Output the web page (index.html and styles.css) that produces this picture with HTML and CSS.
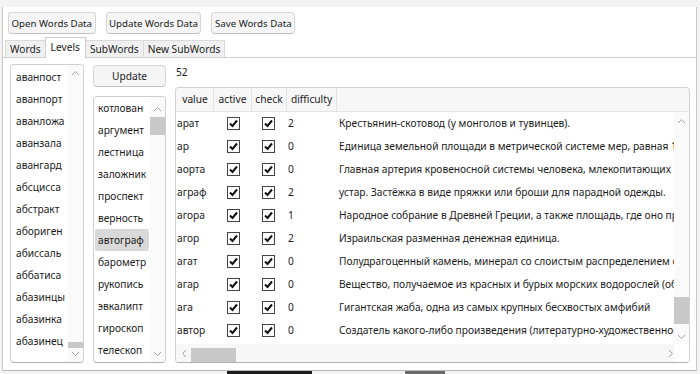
FILE: index.html
```html
<!DOCTYPE html>
<html lang="ru">
<head>
  <meta charset="UTF-8">
  <title>Words Data</title>
  <link rel="stylesheet" href="styles.css">
</head>
<body>
<div class="topband"></div>
<div class="window">
  <div class="toolbar">
    <button class="btn">Open Words Data</button>
    <button class="btn">Update Words Data</button>
    <button class="btn">Save Words Data</button>
  </div>

  <div class="tabs">
    <span class="tab">Words</span>
    <span class="tab selected">Levels</span>
    <span class="tab">SubWords</span>
    <span class="tab">New SubWords</span>
  </div>

  <div class="panel">
    <div class="listbox levels">
      <div class="items">
        <div class="item">аванпост</div>
        <div class="item">аванпорт</div>
        <div class="item">аванложа</div>
        <div class="item">аванзала</div>
        <div class="item">авангард</div>
        <div class="item">абсцисса</div>
        <div class="item">абстракт</div>
        <div class="item">абориген</div>
        <div class="item">абиссаль</div>
        <div class="item">аббатиса</div>
        <div class="item">абазинцы</div>
        <div class="item">абазинка</div>
        <div class="item">абазинец</div>
      </div>
      <div class="vscroll">
        <svg class="chev" width="9" height="6" viewBox="0 0 9 6"><polyline points="1,5 4.5,1.5 8,5"/></svg>
        <div class="track"><div class="thumb thumb-end"></div></div>
        <svg class="chev" width="9" height="6" viewBox="0 0 9 6"><polyline points="1,1 4.5,4.5 8,1"/></svg>
      </div>
    </div>

    <div class="col-mid">
      <button class="btn update">Update</button>
      <div class="listbox words">
        <div class="items">
          <div class="item">котлован</div>
          <div class="item">аргумент</div>
          <div class="item">лестница</div>
          <div class="item">заложник</div>
          <div class="item">проспект</div>
          <div class="item">верность</div>
          <div class="item active">автограф</div>
          <div class="item">барометр</div>
          <div class="item">рукопись</div>
          <div class="item">эвкалипт</div>
          <div class="item">гироскоп</div>
          <div class="item">телескоп</div>
        </div>
        <div class="vscroll">
          <svg class="chev" width="9" height="6" viewBox="0 0 9 6"><polyline points="1,5 4.5,1.5 8,5"/></svg>
          <div class="track"><div class="thumb thumb-top"></div></div>
          <svg class="chev" width="9" height="6" viewBox="0 0 9 6"><polyline points="1,1 4.5,4.5 8,1"/></svg>
        </div>
      </div>
    </div>

    <div class="col-grid">
      <div class="count">52</div>
      <div class="grid">
        <div class="grid-head">
          <span class="c-value">value</span>
          <span class="c-active">active</span>
          <span class="c-check">check</span>
          <span class="c-diff">difficulty</span>
          <span class="c-desc"></span>
        </div>
        <div class="grid-body">
          <div class="rows" id="rows"></div>
          <div class="vscroll">
            <svg class="chev" width="9" height="6" viewBox="0 0 9 6"><polyline points="1,5 4.5,1.5 8,5"/></svg>
            <div class="track"><div class="thumb thumb-grid"></div></div>
            <svg class="chev" width="9" height="6" viewBox="0 0 9 6"><polyline points="1,1 4.5,4.5 8,1"/></svg>
          </div>
        </div>
        <div class="hscroll">
          <svg class="chev" width="6" height="9" viewBox="0 0 6 9"><polyline points="5,1 1.5,4.5 5,8"/></svg>
          <div class="htrack"><div class="hthumb"></div></div>
          <svg class="chev" width="6" height="9" viewBox="0 0 6 9"><polyline points="1,1 4.5,4.5 1,8"/></svg>
          <div class="corner"></div>
        </div>
      </div>
    </div>
  </div>
</div>
<div class="taskbar"><span class="dark"></span><span class="mid"></span></div>

<script>
  const words = [
    ["арат", 2, "Крестьянин-скотовод (у монголов и тувинцев)."],
    ["ар", 0, "Единица земельной площади в метрической системе мер, равная 100 кв. м."],
    ["аорта", 0, "Главная артерия кровеносной системы человека, млекопитающих и птиц."],
    ["аграф", 2, "устар. Застёжка в виде пряжки или броши для парадной одежды."],
    ["агора", 1, "Народное собрание в Древней Греции, а также площадь, где оно проходило."],
    ["агор", 2, "Израильская разменная денежная единица."],
    ["агат", 0, "Полудрагоценный камень, минерал со слоистым распределением окраски."],
    ["агар", 0, "Вещество, получаемое из красных и бурых морских водорослей (обычно агар-агар)."],
    ["ага", 0, "Гигантская жаба, одна из самых крупных бесхвостых амфибий"],
    ["автор", 0, "Создатель какого-либо произведения (литературно-художественного, научного)."],
    ["авось", 0, ""]
  ];

  const box = '<span class="box"><svg width="11" height="11" viewBox="0 0 11 11"><polyline points="2,5.5 4.5,8 9,2.5"/></svg></span>';
  document.getElementById("rows").innerHTML = words.map(w => `
    <div class="row">
      <span class="c-value">${w[0]}</span>
      <span class="c-active">${box}</span>
      <span class="c-check">${box}</span>
      <span class="c-diff">${w[1]}</span>
      <span class="c-desc">${w[2]}</span>
    </div>`).join("");
</script>
</body>
</html>
```

FILE: styles.css
```css
* { box-sizing: border-box; }
html, body { margin: 0; height: 100%; overflow: hidden; }
body {
  font-family: "Noto Sans", "Open Sans", sans-serif;
  font-size: 10.2px;
  color: #1b1b1b;
  background: #f3f3f3;
}
.topband { height: 7px; }
.window {
  background: #fff;
  margin-left: 2px;
  margin-right: 3px;
  height: 364px;
  border-left: 1px solid #c8c8c8;
  border-right: 1px solid #c8c8c8;
  display: flex;
  flex-direction: column;
}
.btn {
  font: inherit;
  color: #1b1b1b;
  background: #f5f5f5;
  border: 1px solid #d6d6d6;
  border-bottom-color: #c2c2c2;
  border-radius: 4px;
  height: 22px;
  padding: 0 2px;
}
.toolbar { display: flex; gap: 10px; padding: 5px 0 0 5px; flex: none; }
.toolbar .btn { padding: 0 2.5px; font-size: 9.7px; }
.tabs { display: flex; padding: 4px 0 0 2px; height: 23px; align-items: flex-end; flex: none; }
.tab {
  height: 17px;
  line-height: 16px;
  padding: 0 4px;
  background: #f0f0f0;
  border: 1px solid #d9d9d9;
  border-bottom: none;
  margin-right: -1px;
}
.tab.selected {
  height: 21px;
  line-height: 18px;
  padding: 0 5px;
  background: #fff;
  border-color: #cfcfcf;
  position: relative;
  z-index: 1;
  margin-bottom: -1px;
}
.panel {
  flex: 1;
  min-height: 0;
  border-top: 1px solid #cfcfcf;
  border-bottom: 1px solid #b9b9b9;
  display: flex;
  padding: 6px 0 7px 7px;
  gap: 9px;
}

.listbox {
  border: 1px solid #cfcfcf;
  border-bottom-color: #b0b0b0;
  border-radius: 4px;
  display: flex;
  overflow: hidden;
  min-height: 0;
}
.levels { width: 74px; flex: none; }
.items { flex: 1; overflow: hidden; padding-top: 1px; min-width: 0; }
.item { height: 22px; line-height: 22px; padding-left: 5px; white-space: nowrap; }
.words .items { padding: 0 0 0 1px; }
.words .item { padding-left: 3px; }
.item.active { background: #d9d9d9; border-radius: 2px; margin-right: 1px; }

.vscroll {
  width: 15px;
  flex: none;
  background: #fafafa;
  display: flex;
  flex-direction: column;
  align-items: center;
  padding: 5px 0;
}
.vscroll .track { flex: 1; width: 100%; position: relative; }
.chev { fill: none; stroke: #a0a0a0; stroke-width: 1; flex: none; }
.thumb { position: absolute; left: 0; right: 0; background: #c8c8c8; }
.thumb-end { bottom: 3px; height: 6px; }
.thumb-top { top: 5px; height: 18px; }
.thumb-grid { bottom: 10px; height: 27px; }

.col-mid { width: 73px; flex: none; display: flex; flex-direction: column; gap: 9px; min-height: 0; }
.update { width: 73px; margin-top: 1px; flex: none; }
.words { flex: 1; }
.words .vscroll { padding-top: 9px; }

.col-grid { flex: 1; min-width: 0; display: flex; flex-direction: column; margin-right: 6px; }
.count { height: 23px; line-height: 17px; padding-left: 1px; flex: none; }
.grid {
  flex: 1;
  min-height: 0;
  border: 1px solid #d2d2d2;
  border-bottom-color: #b0b0b0;
  border-radius: 4px;
  display: flex;
  flex-direction: column;
  overflow: hidden;
}
.grid-head {
  display: flex;
  height: 24px;
  line-height: 23px;
  background: #f7f7f7;
  border-bottom: 1px solid #e3e3e3;
  flex: none;
}
.grid-head span { text-align: center; border-right: 1px solid #e3e3e3; }
.grid-head .c-desc { border-right: none; }
.c-value { width: 38px; flex: none; padding-left: 1px; }
.c-active { width: 38px; flex: none; }
.c-check { width: 35px; flex: none; }
.c-diff { width: 50px; flex: none; }
.c-desc { flex: 1; white-space: nowrap; overflow: hidden; }
.grid-body { flex: 1; min-height: 0; display: flex; overflow: hidden; }
.rows { flex: 1; min-width: 0; overflow: hidden; }
.row { display: flex; height: 23px; line-height: 23px; white-space: nowrap; }
.row .c-active, .row .c-check { display: flex; align-items: center; justify-content: center; }
.row .c-check { justify-content: flex-start; padding-left: 10px; }
.row .c-active { padding-left: 1px; }
.row .c-diff { padding-left: 1px; }
.row .c-desc { padding-left: 2px; text-overflow: clip; }
.row .c-value { padding-left: 1px; }
.box {
  width: 13px;
  height: 13px;
  border: 1px solid #444;
  display: flex;
  align-items: center;
  justify-content: center;
  background: #fff;
}
.box polyline { fill: none; stroke: #111; stroke-width: 2; }
.grid-body .vscroll { padding: 6px 0 4px; }

.hscroll {
  height: 18px;
  flex: none;
  background: #f7f7f7;
  display: flex;
  align-items: center;
  padding-left: 5px;
}
.htrack { flex: 1; height: 100%; position: relative; margin: 0 6px 0 4px; }
.hthumb { position: absolute; left: 0; top: 4px; width: 45px; height: 15px; background: #c8c8c8; }
.corner { width: 15px; height: 100%; background: #fff; }

.taskbar { position: absolute; left: 0; right: 0; top: 371px; height: 3px; }
.taskbar .dark { position: absolute; left: 227px; width: 85px; height: 3px; background: #1e1e1e; }
.taskbar .mid { position: absolute; left: 405px; width: 40px; height: 3px; background: #6a6a6a; }
```
